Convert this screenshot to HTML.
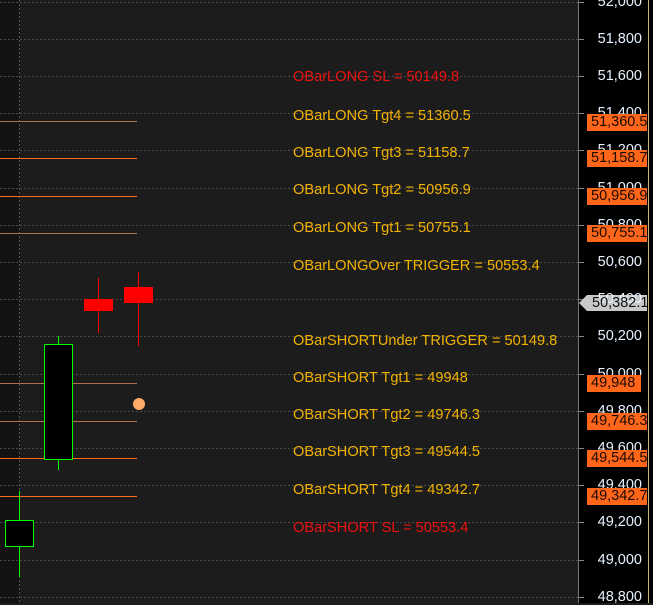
<!DOCTYPE html>
<html><head><meta charset="utf-8"><style>
html,body{margin:0;padding:0;width:653px;height:603px;overflow:hidden;background:#1c1c1c;font-family:"Liberation Sans",Arial,sans-serif}
.t{position:absolute;left:293px;font-size:14.6px;line-height:16px;white-space:nowrap;color:#f2b300}
.r{color:#ee1111}
.ax{position:absolute;right:11px;font-size:14.5px;line-height:16px;color:#e6f2ff;text-align:right}
.ob{position:absolute;left:587px;width:60px;height:17px;background:#ff6619;color:#1a0a00;font-size:14.5px;line-height:17px;padding-left:4px;box-sizing:border-box;white-space:nowrap;overflow:hidden}
</style></head><body>
<svg width="653" height="603" style="position:absolute;left:0;top:0">
<rect x="0" y="0" width="20" height="603" fill="#121212"/>
<rect x="578" y="0" width="75" height="603" fill="#000"/>
<g stroke="#555" stroke-dasharray="2,2" stroke-width="1">
<line x1="19.5" y1="0" x2="19.5" y2="603"/>
</g>
<g id="grid" stroke="#4a4a4a" stroke-dasharray="2,2" stroke-width="1">
<line x1="0" x2="578" y1="2.5" y2="2.5"/><line x1="0" x2="578" y1="39.5" y2="39.5"/>
<line x1="0" x2="578" y1="76.5" y2="76.5"/><line x1="0" x2="578" y1="113.5" y2="113.5"/>
<line x1="0" x2="578" y1="150.5" y2="150.5"/><line x1="0" x2="578" y1="188.5" y2="188.5"/>
<line x1="0" x2="578" y1="225.5" y2="225.5"/><line x1="0" x2="578" y1="262.5" y2="262.5"/>
<line x1="0" x2="578" y1="299.5" y2="299.5"/><line x1="0" x2="578" y1="336.5" y2="336.5"/>
<line x1="0" x2="578" y1="374.5" y2="374.5"/><line x1="0" x2="578" y1="411.5" y2="411.5"/>
<line x1="0" x2="578" y1="448.5" y2="448.5"/><line x1="0" x2="578" y1="485.5" y2="485.5"/>
<line x1="0" x2="578" y1="522.5" y2="522.5"/><line x1="0" x2="578" y1="560.5" y2="560.5"/>
<line x1="0" x2="578" y1="597.5" y2="597.5"/>
</g>
<g stroke="#888" stroke-width="1">
<line x1="578" x2="584" y1="2.5" y2="2.5"/><line x1="578" x2="584" y1="39.5" y2="39.5"/>
<line x1="578" x2="584" y1="76.5" y2="76.5"/><line x1="578" x2="584" y1="113.5" y2="113.5"/>
<line x1="578" x2="584" y1="150.5" y2="150.5"/><line x1="578" x2="584" y1="188.5" y2="188.5"/>
<line x1="578" x2="584" y1="225.5" y2="225.5"/><line x1="578" x2="584" y1="262.5" y2="262.5"/>
<line x1="578" x2="584" y1="299.5" y2="299.5"/><line x1="578" x2="584" y1="336.5" y2="336.5"/>
<line x1="578" x2="584" y1="374.5" y2="374.5"/><line x1="578" x2="584" y1="411.5" y2="411.5"/>
<line x1="578" x2="584" y1="448.5" y2="448.5"/><line x1="578" x2="584" y1="485.5" y2="485.5"/>
<line x1="578" x2="584" y1="522.5" y2="522.5"/><line x1="578" x2="584" y1="560.5" y2="560.5"/>
<line x1="578" x2="584" y1="597.5" y2="597.5"/>
</g>
<line x1="578.5" y1="0" x2="578.5" y2="603" stroke="#777"/>
<line x1="648.5" y1="0" x2="648.5" y2="603" stroke="#c8b070"/>
<g stroke="#ff6a20" stroke-width="1">
<line x1="0" x2="137" y1="121.5" y2="121.5" stroke="#b07050"/>
<line x1="0" x2="137" y1="158.5" y2="158.5"/>
<line x1="0" x2="137" y1="196.5" y2="196.5"/>
<line x1="0" x2="137" y1="233.5" y2="233.5" stroke="#b07050"/>
<line x1="0" x2="137" y1="383.5" y2="383.5" stroke="#b07050"/>
<line x1="0" x2="137" y1="421.5" y2="421.5" stroke="#b07050"/>
<line x1="0" x2="137" y1="458.5" y2="458.5"/>
<line x1="0" x2="137" y1="496.5" y2="496.5"/>
</g>
<g stroke="#00ff00" stroke-width="1">
<line x1="58.5" y1="336" x2="58.5" y2="470"/>
<rect x="44.5" y="344.5" width="28" height="115" fill="#000"/>
<line x1="19.5" y1="491" x2="19.5" y2="577"/>
<rect x="5.5" y="520.5" width="28" height="26" fill="#000"/>
</g>
<g fill="#ff0000" stroke="#ff0000">
<line x1="98.5" y1="278" x2="98.5" y2="333"/>
<rect x="84" y="299" width="29" height="12" stroke="none"/>
<line x1="138.5" y1="272" x2="138.5" y2="346"/>
<rect x="124" y="287" width="29" height="16" stroke="none"/>
</g>
<circle cx="139" cy="404" r="6" fill="#ffaa66"/>
<polygon points="579,303 587,295 647,295 647,311 587,311" fill="#c8c8c8"/>
</svg>
<div class="ax" style="top:-6px">52,000</div>
<div class="ax" style="top:31px">51,800</div>
<div class="ax" style="top:68px">51,600</div>
<div class="ax" style="top:105px">51,400</div>
<div class="ax" style="top:142px">51,200</div>
<div class="ax" style="top:180px">51,000</div>
<div class="ax" style="top:217px">50,800</div>
<div class="ax" style="top:254px">50,600</div>
<div class="ax" style="top:291px">50,400</div>
<div class="ax" style="top:328px">50,200</div>
<div class="ax" style="top:366px">50,000</div>
<div class="ax" style="top:403px">49,800</div>
<div class="ax" style="top:440px">49,600</div>
<div class="ax" style="top:477px">49,400</div>
<div class="ax" style="top:514px">49,200</div>
<div class="ax" style="top:552px">49,000</div>
<div class="ax" style="top:589px">48,800</div>
<div class="ob" style="top:114px">51,360.5</div>
<div class="ob" style="top:150px">51,158.7</div>
<div class="ob" style="top:188px">50,956.9</div>
<div class="ob" style="top:225px">50,755.1</div>
<div class="ob" style="top:295px;background:transparent;color:#111;padding-left:5px">50,382.1</div>
<div class="ob" style="top:375px;width:54px">49,948</div>
<div class="ob" style="top:413px">49,746.3</div>
<div class="ob" style="top:450px">49,544.5</div>
<div class="ob" style="top:488px">49,342.7</div>
<div class="t r" style="top:69px">OBarLONG SL = 50149.8</div>
<div class="t" style="top:108px">OBarLONG Tgt4 = 51360.5</div>
<div class="t" style="top:145px">OBarLONG Tgt3 = 51158.7</div>
<div class="t" style="top:182px">OBarLONG Tgt2 = 50956.9</div>
<div class="t" style="top:220px">OBarLONG Tgt1 = 50755.1</div>
<div class="t" style="top:258px">OBarLONGOver TRIGGER = 50553.4</div>
<div class="t" style="top:333px">OBarSHORTUnder TRIGGER = 50149.8</div>
<div class="t" style="top:370px">OBarSHORT Tgt1 = 49948</div>
<div class="t" style="top:407px">OBarSHORT Tgt2 = 49746.3</div>
<div class="t" style="top:444px">OBarSHORT Tgt3 = 49544.5</div>
<div class="t" style="top:482px">OBarSHORT Tgt4 = 49342.7</div>
<div class="t r" style="top:520px">OBarSHORT SL = 50553.4</div>
</body></html>
